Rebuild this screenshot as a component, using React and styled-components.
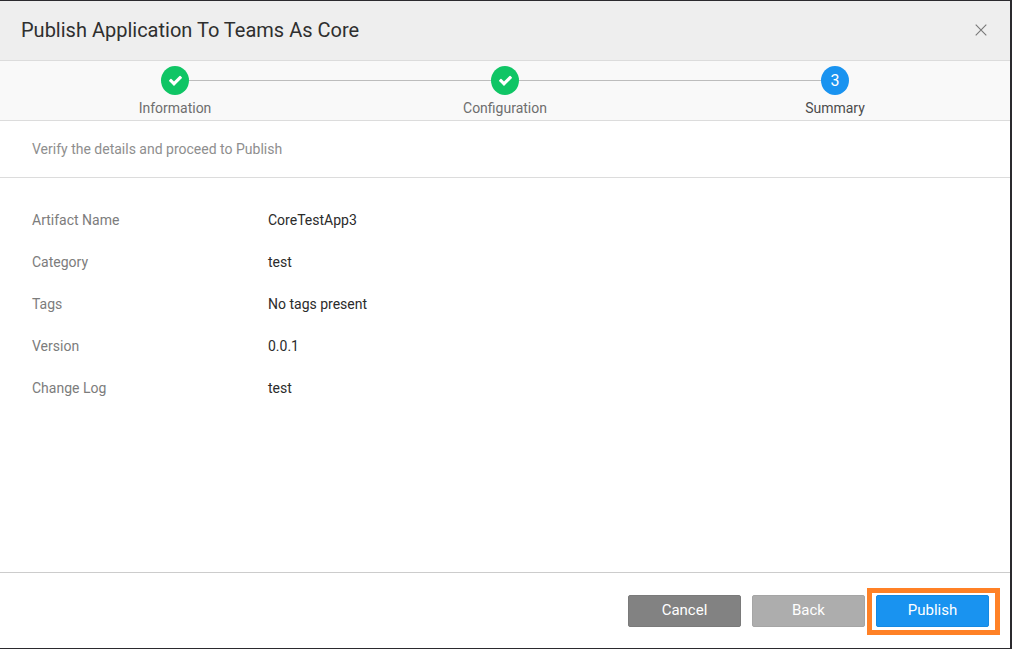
import React from "react";
import styled, { createGlobalStyle } from "styled-components";

const GlobalStyle = createGlobalStyle`
  *, *::before, *::after { box-sizing: border-box; }
  body {
    margin: 0;
    background: #fff;
    color: #333;
    font-family: Roboto, "Liberation Sans", sans-serif;
    font-size: 14px;
    line-height: 20px;
  }
`;

const Dialog = styled.section`
  display: flex;
  flex-direction: column;
  min-height: 100vh;
  background: #fff;
  border: solid #2b2a2e;
  border-width: 1px 2px 1px 0;
`;

const Header = styled.header`
  display: flex;
  align-items: center;
  justify-content: space-between;
  height: 60px;
  padding: 0 19px 2px 21px;
  background: #eee;
  border-bottom: 1px solid #dcdcdc;
`;

const Title = styled.h1`
  margin: 0;
  color: #2f2f2f;
  font-size: 20px;
  font-weight: 400;
  line-height: 28px;
`;

const CloseButton = styled.button`
  display: flex;
  align-items: center;
  justify-content: center;
  width: 20px;
  height: 20px;
  padding: 0;
  color: #777;
  background: none;
  border: 0;
  cursor: pointer;
`;

const Steps = styled.ol`
  display: flex;
  height: 60px;
  margin: 0;
  padding: 5px 10px 0;
  list-style: none;
  background: #f9f9f9;
  border-bottom: 1px solid #dcdcdc;
`;

const Step = styled.li`
  flex: 1;
  display: flex;
  flex-direction: column;
  align-items: center;
  gap: 3px;
  color: ${(p) => (p.$current ? "#4c4c4c" : "#6e6e6e")};
`;

const StepTrack = styled.div`
  display: flex;
  align-items: center;
  align-self: stretch;
`;

const StepLine = styled.span`
  flex: 1;
  height: 1px;
  background: ${(p) => (p.$hidden ? "transparent" : "#bdbdbd")};
`;

const StepMarker = styled.span`
  display: flex;
  align-items: center;
  justify-content: center;
  width: 28px;
  height: 29px;
  border-radius: 50%;
  color: #fff;
  font-size: 16px;
  background: ${(p) => (p.$current ? "#1993f0" : "#0fc565")};
`;

const Intro = styled.p`
  margin: 0;
  padding: 18px 32px;
  color: #8e8e8e;
  border-bottom: 1px solid #dcdcdc;
`;

const Details = styled.dl`
  flex: 1;
  margin: 0;
  padding: 21px 32px;
`;

const DetailRow = styled.div`
  display: grid;
  grid-template-columns: 236px 1fr;
  align-items: center;
  min-height: 42px;
`;

const DetailLabel = styled.dt`
  color: #7c7c7c;
`;

const DetailValue = styled.dd`
  margin: 0;
  color: #2b2b2b;
`;

const Footer = styled.footer`
  display: flex;
  justify-content: flex-end;
  gap: 11px;
  padding: 22px 21px 21px;
  border-top: 1px solid #ccc;
`;

const tones = {
  dark: { fill: "#828282", edge: "#7a7a7a" },
  light: { fill: "#adadad", edge: "#a5a5a5" },
  primary: { fill: "#1993f0", edge: "#1689e2" },
};

const Button = styled.button`
  width: 113px;
  height: 32px;
  padding: 0 0 2px;
  color: #fff;
  background: ${(p) => tones[p.$tone].fill};
  border: 1px solid ${(p) => tones[p.$tone].edge};
  border-radius: 2px;
  font-family: inherit;
  font-size: 15px;
  font-weight: 400;
  line-height: 20px;
  cursor: pointer;
`;

const Highlight = styled.div`
  position: relative;
  display: flex;

  &::after {
    content: "";
    position: absolute;
    inset: -7px -11px -8px -9px;
    border: 5px solid #ff8126;
    pointer-events: none;
  }
`;

const CheckIcon = () => (
  <svg width="15" height="15" viewBox="0 0 1792 1792" fill="currentColor" aria-hidden="true">
    <path d="M1671 566q0 40-28 68l-724 724-136 136q-28 28-68 28t-68-28l-136-136-362-362q-28-28-28-68t28-68l136-136q28-28 68-28t68 28l294 295 656-657q28-28 68-28t68 28l136 136q28 28 28 68z" />
  </svg>
);

const CloseIcon = () => (
  <svg width="12" height="12" viewBox="0 0 12 12" fill="none" stroke="currentColor" strokeWidth="1.1" aria-hidden="true">
    <path d="M0.7 0.7 11.3 11.3M11.3 0.7 0.7 11.3" />
  </svg>
);

const steps = ["Information", "Configuration", "Summary"];
const currentStep = 2;

const details = [
  ["Artifact Name", "CoreTestApp3"],
  ["Category", "test"],
  ["Tags", "No tags present"],
  ["Version", "0.0.1"],
  ["Change Log", "test"],
];

export default function App() {
  return (
    <>
      <GlobalStyle />
      <Dialog role="dialog" aria-labelledby="dialog-title">
        <Header>
          <Title id="dialog-title">Publish Application To Teams As Core</Title>
          <CloseButton type="button" aria-label="Close">
            <CloseIcon />
          </CloseButton>
        </Header>
        <Steps>
          {steps.map((label, i) => (
            <Step key={label} $current={i === currentStep}>
              <StepTrack>
                <StepLine $hidden={i === 0} />
                <StepMarker $current={i === currentStep}>
                  {i < currentStep ? <CheckIcon /> : i + 1}
                </StepMarker>
                <StepLine $hidden={i === steps.length - 1} />
              </StepTrack>
              <span>{label}</span>
            </Step>
          ))}
        </Steps>
        <Intro>Verify the details and proceed to Publish</Intro>
        <Details>
          {details.map(([label, value]) => (
            <DetailRow key={label}>
              <DetailLabel>{label}</DetailLabel>
              <DetailValue>{value}</DetailValue>
            </DetailRow>
          ))}
        </Details>
        <Footer>
          <Button type="button" $tone="dark">Cancel</Button>
          <Button type="button" $tone="light">Back</Button>
          <Highlight>
            <Button type="button" $tone="primary">Publish</Button>
          </Highlight>
        </Footer>
      </Dialog>
    </>
  );
}
